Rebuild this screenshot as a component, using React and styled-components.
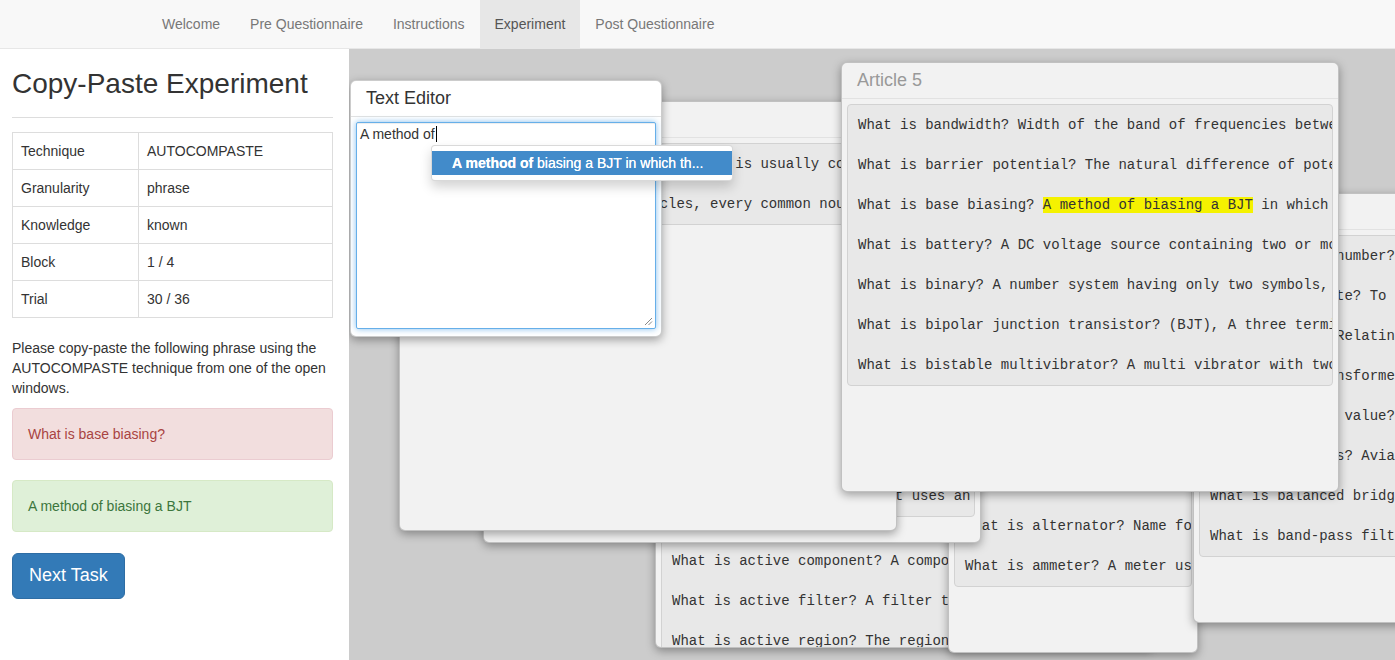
import styled, { createGlobalStyle } from "styled-components";

const GlobalStyle = createGlobalStyle`
  html, body {
    margin: 0;
    padding: 0;
  }
  body {
    font-family: "Liberation Sans", Helvetica, Arial, sans-serif;
    font-size: 14px;
    line-height: 20px;
    color: #333;
    background: #fff;
  }
  * {
    box-sizing: border-box;
  }
`;

const Page = styled.div`
  display: flex;
  flex-direction: column;
  width: 100%;
  height: 660px;
  overflow: hidden;
`;

const Navbar = styled.nav`
  display: flex;
  height: 49px;
  padding-left: 147px;
  background-color: #f8f8f8;
  border-bottom: 1px solid #e7e7e7;
`;

const NavItem = styled.a`
  display: block;
  padding: 14px 15px;
  line-height: 20px;
  color: ${(p) => (p.$active ? "#555" : "#777")};
  background-color: ${(p) => (p.$active ? "#e7e7e7" : "transparent")};
  text-decoration: none;
`;

const Main = styled.div`
  display: flex;
  flex: 1;
  min-height: 0;
`;

const Sidebar = styled.aside`
  width: 349px;
  flex-shrink: 0;
  padding: 0 16px 0 12px;
  background: #fff;
`;

const Title = styled.h1`
  margin: 20px 0 0;
  font-size: 28px;
  font-weight: 500;
  line-height: 1.1;
  color: #333;
`;

const Rule = styled.hr`
  margin: 17px 0 14px;
  border: 0;
  border-top: 1px solid #ddd;
`;

const InfoTable = styled.table`
  width: 100%;
  margin-bottom: 20px;
  border-collapse: collapse;
  border: 1px solid #ddd;
`;

const Cell = styled.td`
  padding: 8px;
  line-height: 20px;
  border: 1px solid #ddd;
  width: ${(p) => (p.$label ? "126px" : "auto")};
`;

const Instructions = styled.p`
  margin: 0 0 10px;
`;

const Alert = styled.div`
  padding: 15px;
  margin-bottom: 20px;
  border: 1px solid ${(p) => (p.$kind === "danger" ? "#ebccd1" : "#d6e9c6")};
  border-radius: 4px;
  color: ${(p) => (p.$kind === "danger" ? "#a94442" : "#3c763d")};
  background-color: ${(p) => (p.$kind === "danger" ? "#f2dede" : "#dff0d8")};
`;

const NextButton = styled.button`
  margin-top: 1px;
  padding: 10px 16px;
  font-family: inherit;
  font-size: 18px;
  line-height: 1.3333;
  color: #fff;
  background-color: #337ab7;
  border: 1px solid #2e6da4;
  border-radius: 6px;
`;

const Desktop = styled.section`
  position: relative;
  flex: 1;
  overflow: hidden;
  background-color: #ccc;
`;

const Window = styled.div`
  position: absolute;
  left: ${(p) => p.$left}px;
  top: ${(p) => p.$top}px;
  width: ${(p) => p.$width}px;
  height: ${(p) => p.$height}px;
  z-index: ${(p) => p.$z};
  display: flex;
  flex-direction: column;
  background-color: ${(p) => (p.$editor ? "#fff" : "#f2f2f2")};
  border: 1px solid rgba(0, 0, 0, 0.2);
  border-radius: 6px;
  box-shadow: 0 3px 10px rgba(0, 0, 0, 0.35);
  overflow: ${(p) => (p.$editor ? "visible" : "hidden")};
`;

const WindowHeader = styled.div`
  height: 36px;
  flex-shrink: 0;
  padding: 0 15px;
  font-size: 18px;
  line-height: 34px;
  color: ${(p) => (p.$muted ? "#999" : "#333")};
  border-bottom: 1px solid #e2e2e2;
`;

const WindowBody = styled.div`
  flex: 1;
  min-height: 0;
  padding: 5px;
`;

const ArticleText = styled.pre`
  margin: 0;
  padding: 10px;
  font-family: "Liberation Mono", "Courier New", monospace;
  font-size: 14px;
  line-height: 20px;
  color: #333;
  white-space: pre;
  overflow: hidden;
  background-color: #e8e8e8;
  border: 1px solid #d2d2d2;
  border-radius: 4px;
`;

const Mark = styled.span`
  background-color: #f5f200;
`;

const EditorField = styled.div`
  position: relative;
  height: 207px;
  padding: 1px 3px;
  line-height: 20px;
  color: #333;
  background: #fff;
  border: 1px solid #66afe9;
  border-radius: 2px;
  box-shadow: inset 0 1px 1px rgba(0, 0, 0, 0.075), 0 0 6px rgba(102, 175, 233, 0.8);
`;

const Caret = styled.span`
  display: inline-block;
  width: 1px;
  height: 16px;
  margin-left: 1px;
  vertical-align: -3px;
  background: #000;
`;

const Grip = styled.svg`
  position: absolute;
  right: 2px;
  bottom: 2px;
`;

const Suggestions = styled.ul`
  position: absolute;
  left: 80px;
  top: 64px;
  width: 302px;
  margin: 0;
  padding: 5px 0;
  list-style: none;
  background: #fff;
  border: 1px solid rgba(0, 0, 0, 0.15);
  border-radius: 4px;
  box-shadow: 0 6px 12px rgba(0, 0, 0, 0.175);
  z-index: 10;
`;

const Suggestion = styled.li`
  padding: 2px 20px;
  line-height: 20px;
  color: #fff;
  background-color: #428bca;
  white-space: nowrap;
  overflow: hidden;
  text-shadow: 0 0 0.3px #fff;

  b {
    font-weight: 700;
  }
`;

const articles = [
  {
    title: "Article 1",
    left: 306,
    top: 169,
    width: 498,
    z: 1,
    lines: [
      "What is AC? Alternating current, a current that changes direction periodically.",
      "What is acceptor? A trivalent impurity atom used to make p-type material.",
      "What is AC load line? The load line that shows every operating point.",
      "What is AC resistance? The ratio of a change in voltage to a change in current.",
      "What is AC short? A path with a very low impedance at the signal frequency.",
      "What is AC signal? A signal whose value varies with time.",
      "What is AC voltage? A voltage that reverses its polarity periodically.",
      "What is active component? A component that can amplify a signal.",
      "What is active filter? A filter that uses active components.",
      "What is active region? The region of operation between cutoff and saturation.",
    ],
  },
  {
    title: "Article 3",
    left: 599,
    top: 174,
    width: 250,
    z: 2,
    lines: [
      "What is admittance? The reciprocal of impedance.",
      "What is air core? A coil wound on a non magnetic form.",
      "What is alpha? The ratio of collector current to emitter current.",
      "What is alloy? A mixture of two or more metals.",
      "What is alkaline cell? A primary cell with an alkaline electrolyte.",
      "What is amount? The total number in it.",
      "What is alternator? Name for an AC generator.",
      "What is ammeter? A meter used to measure current.",
    ],
  },
  {
    title: "Article 2",
    left: 134,
    top: 64,
    width: 498,
    z: 3,
    lines: [
      "What is absorption? The loss of energy as a wave passes through a medium.",
      "What is accumulator? A register that stores intermediate results.",
      "What is accuracy? The closeness of a measured value to the true value.",
      "What is acoustic? A term relating to sound and hearing.",
      "What is address? A number that identifies a memory location.",
      "What is admittance? The ease with which a circuit allows current to flow.",
      "What is aerial? Another name for an antenna.",
      "What is alkaline? A type of battery chemistry.",
      "What is amplifier? A simple electronic unit that uses an external power source.",
    ],
  },
  {
    title: "Article 4",
    left: 844,
    top: 144,
    width: 498,
    z: 4,
    lines: [
      "What is binary number? A number written in base two.",
      "What is baud rate? To indicate the number of symbols per second.",
      "What is balun? Relating two impedances with a transformer.",
      "What is bus transformer? A transformer feeding a common bus.",
      "What is beta DC value? The ratio of collector current to base current.",
      "What is balloons? Aviation markers placed on power lines.",
      "What is balanced bridge? A bridge circuit with zero output voltage.",
      "What is band-pass filter? A filter that passes a range of frequencies.",
    ],
  },
  {
    title: "Article 1",
    left: 50,
    top: 52,
    width: 498,
    z: 5,
    lines: [
      "What is an article? A determiner that is usually considered an adjective.",
      "What is noun? Apart from articles, every common noun needs a determiner.",
    ],
  },
];

const articleFive = [
  "What is bandwidth? Width of the band of frequencies between the half power points.",
  "What is barrier potential? The natural difference of potential across a pn junction.",
  null,
  "What is battery? A DC voltage source containing two or more cells.",
  "What is binary? A number system having only two symbols, 0 and 1.",
  "What is bipolar junction transistor? (BJT), A three terminal semiconductor device.",
  "What is bistable multivibrator? A multi vibrator with two stable states.",
];

const infoRows = [
  ["Technique", "AUTOCOMPASTE"],
  ["Granularity", "phrase"],
  ["Knowledge", "known"],
  ["Block", "1 / 4"],
  ["Trial", "30 / 36"],
];

const ArticleWindow = ({ article }) => (
  <Window
    $left={article.left}
    $top={article.top}
    $width={article.width}
    $height={430}
    $z={article.z}
  >
    <WindowHeader $muted>{article.title}</WindowHeader>
    <WindowBody>
      <ArticleText>{article.lines.join("\n\n")}</ArticleText>
    </WindowBody>
  </Window>
);

const App = () => {
  return (
    <Page>
      <GlobalStyle />
      <Navbar>
        <NavItem>Welcome</NavItem>
        <NavItem>Pre Questionnaire</NavItem>
        <NavItem>Instructions</NavItem>
        <NavItem $active>Experiment</NavItem>
        <NavItem>Post Questionnaire</NavItem>
      </Navbar>
      <Main>
        <Sidebar>
          <Title>Copy-Paste Experiment</Title>
          <Rule />
          <InfoTable>
            <tbody>
              {infoRows.map(([label, value]) => (
                <tr key={label}>
                  <Cell $label>{label}</Cell>
                  <Cell>{value}</Cell>
                </tr>
              ))}
            </tbody>
          </InfoTable>
          <Instructions>
            Please copy-paste the following phrase using the AUTOCOMPASTE
            technique from one of the open windows.
          </Instructions>
          <Alert $kind="danger">What is base biasing?</Alert>
          <Alert $kind="success">A method of biasing a BJT</Alert>
          <NextButton>Next Task</NextButton>
        </Sidebar>

        <Desktop>
          {articles.map((a, i) => (
            <ArticleWindow key={i} article={a} />
          ))}

          <Window $editor $left={1} $top={31} $width={312} $height={257} $z={6}>
            <WindowHeader>Text Editor</WindowHeader>
            <WindowBody>
              <EditorField>
                A method of
                <Caret />
                <Grip width="9" height="9" viewBox="0 0 9 9">
                  <path d="M1 8 L8 1 M4.5 8 L8 4.5" stroke="#888" strokeWidth="1" />
                </Grip>
              </EditorField>
            </WindowBody>
            <Suggestions>
              <Suggestion>
                <b>A method of</b> biasing a BJT in which th...
              </Suggestion>
            </Suggestions>
          </Window>

          <Window $left={492} $top={13} $width={498} $height={430} $z={7}>
            <WindowHeader $muted>Article 5</WindowHeader>
            <WindowBody>
              <ArticleText>
                {articleFive.map((line, i) => (
                  <span key={i}>
                    {i > 0 && "\n\n"}
                    {line === null ? (
                      <>
                        What is base biasing? <Mark>A method of biasing a BJT</Mark> in which the bias voltage is applied to the base.
                      </>
                    ) : (
                      line
                    )}
                  </span>
                ))}
              </ArticleText>
            </WindowBody>
          </Window>
        </Desktop>
      </Main>
    </Page>
  );
};

export default App;
